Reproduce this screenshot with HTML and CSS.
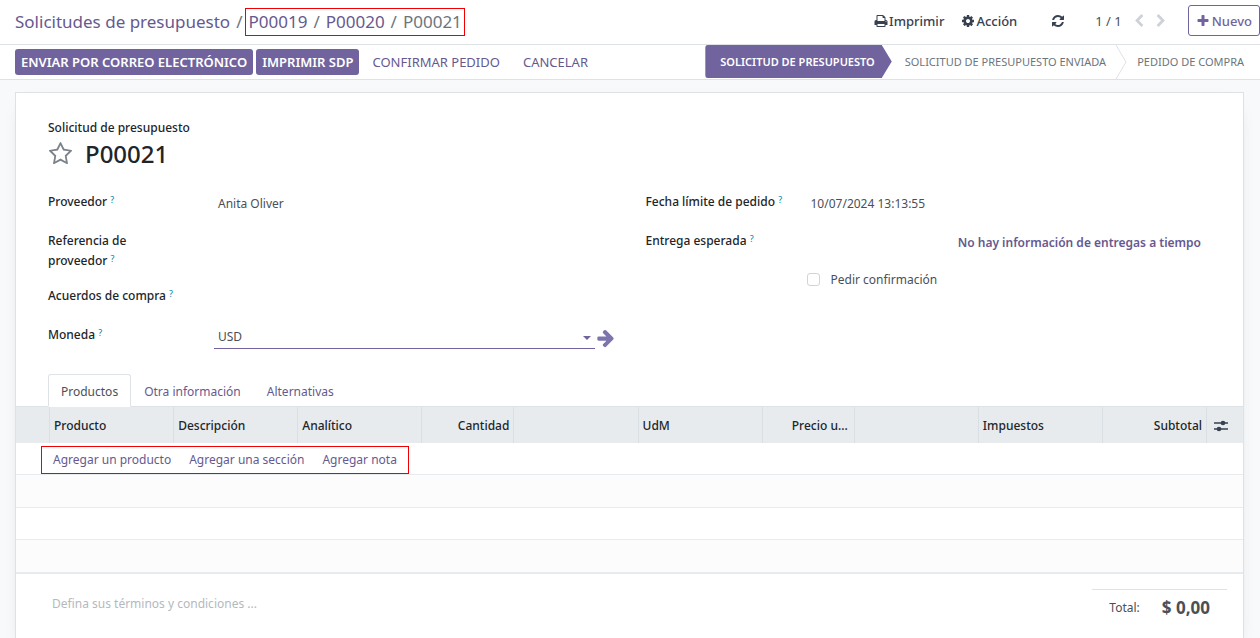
FILE: index.html
```
<!DOCTYPE html>
<html lang="es">
<head>
<meta charset="utf-8">
<title>P00021 - Solicitudes de presupuesto</title>
<link rel="stylesheet" href="styles.css">
</head>
<body>
<header class="topbar">
  <nav class="breadcrumb" aria-label="Ruta">
    <a class="crumb" href="#">Solicitudes de presupuesto</a>
    <span class="slash">/</span>
    <span class="marked crumbs-marked"><a class="crumb" href="#">P00019</a><span class="slash">/</span><a class="crumb" href="#">P00020</a><span class="slash">/</span><span class="current">P00021</span></span>
  </nav>
  <div class="tools">
    <button class="tool print" type="button"><svg class="icon" viewBox="0 0 1792 1792"><path d="M448 1536h896v-256h-896v256zm0-640h896v-384h-160q-40 0-68-28t-28-68v-160h-640v640zm1152 64q0-26-19-45t-45-19-45 19-19 45 19 45 45 19 45-19 19-45zm128 0v416q0 13-9.500 22.500t-22.500 9.500h-224v160q0 40-28 68t-68 28h-960q-40 0-68-28t-28-68v-160h-224q-13 0-22.500-9.500t-9.500-22.500v-416q0-79 56.500-135.500t135.500-56.500h64v-544q0-40 28-68t68-28h672q40 0 88 20t76 48l152 152q28 28 48 76t20 88v256h64q79 0 135.500 56.500t56.500 135.500z"/></svg>Imprimir</button>
    <button class="tool action" type="button"><svg class="icon" viewBox="0 0 1792 1792"><path d="M1152 896q0-106-75-181t-181-75-181 75-75 181 75 181 181 75 181-75 75-181zm512-109v222q0 12-8 23t-20 13l-185 28q-19 54-39 91 35 50 107 138 10 12 10 25t-9 23q-27 37-99 108t-94 71q-12 0-26-9l-138-108q-44 23-91 38-16 136-29 186-7 28-36 28h-222q-14 0-24.500-8.500t-11.500-21.500l-28-184q-49-16-90-37l-141 107q-10 9-25 9-14 0-25-11-126-114-165-168-7-10-7-23 0-12 8-23 15-21 51-66.500t54-70.500q-27-50-41-99l-183-27q-13-2-21-12.500t-8-23.500v-222q0-12 8-23t19-13l186-28q14-46 39-92-40-57-107-138-10-12-10-24 0-10 9-23 26-36 98.500-107.500t94.500-71.500q13 0 26 10l138 107q44-23 91-38 16-136 29-186 7-28 36-28h222q14 0 24.500 8.500t11.500 21.500l28 184q49 16 90 37l142-107q9-9 24-9 13 0 25 10 129 119 165 170 7 8 7 22 0 12-8 23-15 21-51 66.500t-54 70.500q26 50 41 98l183 28q13 2 21 12.500t8 23.500z"/></svg>Acción</button>
    <button class="tool refresh" type="button" aria-label="Actualizar"><svg class="icon" viewBox="0 0 1792 1792"><path d="M1639 1056q0 5-1 7-64 268-268 434.500t-478 166.500q-146 0-282.500-55t-243.500-157l-129 129q-19 19-45 19t-45-19-19-45v-448q0-26 19-45t45-19h448q26 0 45 19t19 45-19 45l-137 137q71 66 161 102t187 36q134 0 250-65t186-179q11-17 53-117 8-23 30-23h192q13 0 22.500 9.500t9.500 22.500zm25-800v448q0 26-19 45t-45 19h-448q-26 0-45-19t-19-45 19-45l138-138q-148-137-349-137-134 0-250 65t-186 179q-11 17-53 117-8 23-30 23h-199q-13 0-22.500-9.500t-9.500-22.500v-7q65-268 270-434.500t480-166.500q146 0 284 55.500t245 156.500l130-129q19-19 45-19t45 19 19 45z"/></svg></button>
    <span class="pager">1 / 1</span>
    <button class="tool page" type="button" aria-label="Anterior" disabled><svg class="icon" viewBox="0 0 1792 1792"><path d="M1427 301l-531 531 531 531q19 19 19 45t-19 45l-166 166q-19 19-45 19t-45-19l-742-742q-19-19-19-45t19-45l742-742q19-19 45-19t45 19l166 166q19 19 19 45t-19 45z"/></svg></button>
    <button class="tool page" type="button" aria-label="Siguiente" disabled><svg class="icon" viewBox="0 0 1792 1792"><path d="M1363 877l-742 742q-19 19-45 19t-45-19l-166-166q-19-19-19-45t19-45l531-531-531-531q-19-19-19-45t19-45l166-166q19-19 45-19t45 19l742 742q19 19 19 45t-19 45z"/></svg></button>
    <button class="new" type="button"><svg class="icon" viewBox="0 0 1792 1792"><path d="M1600 736v192q0 40-28 68t-68 28h-416v416q0 40-28 68t-68 28h-192q-40 0-68-28t-28-68v-416h-416q-40 0-68-28t-28-68v-192q0-40 28-68t68-28h416v-416q0-40 28-68t68-28h192q40 0 68 28t28 68v416h416q40 0 68 28t28 68z"/></svg>Nuevo</button>
  </div>
</header>

<div class="statusbar">
  <div class="actions">
    <button class="btn primary" type="button">ENVIAR POR CORREO ELECTRÓNICO</button>
    <button class="btn primary" type="button">IMPRIMIR SDP</button>
    <button class="btn" type="button">CONFIRMAR PEDIDO</button>
    <button class="btn" type="button">CANCELAR</button>
  </div>
  <div class="stages">
    <button class="stage active" type="button" aria-current="step">SOLICITUD DE PRESUPUESTO</button>
    <button class="stage sent" type="button">SOLICITUD DE PRESUPUESTO ENVIADA</button>
    <svg class="divider" viewBox="0 0 12 34"><path d="M1 0L11 17L1 34"/></svg>
    <button class="stage" type="button">PEDIDO DE COMPRA</button>
  </div>
</div>

<main class="content">
  <div class="sheet">
    <div class="sheet-head">
      <div class="kind">Solicitud de presupuesto</div>
      <div class="title-row">
        <button class="star" type="button" aria-label="Prioridad"><svg class="star-icon" viewBox="0 0 1792 1792"><path d="M1201 1004l306-297-422-62-189-382-189 382-422 62 306 297-73 421 378-199 377 199zm527-357q0 22-26 48l-363 354 86 500q1 7 1 20 0 50-41 50-19 0-40-12l-449-236-449 236q-22 12-40 12-21 0-31.500-14.500t-10.500-35.500q0-6 2-20l86-500-364-354q-25-27-25-48 0-37 56-46l502-73 225-455q19-41 49-41t49 41l225 455 502 73q56 9 56 46z"/></svg></button>
        <h1 class="title">P00021</h1>
      </div>
    </div>

    <div class="groups">
      <div class="group">
        <div class="field"><span class="label">Proveedor <sup class="help">?</sup></span><span class="value">Anita Oliver</span></div>
        <div class="field"><span class="label">Referencia de proveedor <sup class="help">?</sup></span></div>
        <div class="field"><span class="label">Acuerdos de compra <sup class="help">?</sup></span></div>
        <div class="field">
          <label class="label" for="currency">Moneda <sup class="help">?</sup></label>
          <div class="currency">
            <div class="select-wrap">
              <select class="select" id="currency"><option>USD</option></select>
              <svg class="caret" viewBox="0 0 8 4"><path d="M0 0h8L4 4z"/></svg>
            </div>
            <button class="open" type="button" aria-label="Abrir moneda"><svg class="open-icon" viewBox="96 100 1536 1536"><path d="M1600 960q0 54-37 91l-651 651q-39 37-91 37-51 0-90-37l-75-75q-38-38-38-91t38-91l293-293h-704q-52 0-84.500-37.500t-32.500-90.500v-128q0-53 32.500-90.500t84.500-37.500h704l-293-294q-38-36-38-90t38-90l75-75q38-38 90-38 53 0 91 38l651 651q37 35 37 90z"/></svg></button>
          </div>
        </div>
      </div>
      <div class="group right">
        <div class="field"><span class="label">Fecha límite de pedido <sup class="help">?</sup></span><span class="value">10/07/2024 13:13:55</span></div>
        <div class="field"><span class="label">Entrega esperada <sup class="help">?</sup></span><a class="value delivery" href="#">No hay información de entregas a tiempo</a></div>
        <div class="field"><span></span><div class="confirm"><input class="check" type="checkbox" id="confirm"><label for="confirm">Pedir confirmación</label></div></div>
      </div>
    </div>

    <div class="tabs" role="tablist">
      <button class="tab selected" type="button" role="tab" aria-selected="true">Productos</button>
      <button class="tab" type="button" role="tab">Otra información</button>
      <button class="tab" type="button" role="tab">Alternativas</button>
    </div>

    <table class="lines">
      <colgroup><col class="c-handle"><col><col><col><col class="c-num"><col><col><col class="c-num"><col><col><col class="c-sub"><col class="c-opt"></colgroup>
      <thead>
        <tr>
          <th></th><th>Producto</th><th>Descripción</th><th>Analítico</th><th class="num">Cantidad</th><th></th><th>UdM</th><th class="num price">Precio u...</th><th></th><th>Impuestos</th><th class="num">Subtotal</th>
          <th><button class="columns" type="button" aria-label="Columnas opcionales"><svg class="sliders" viewBox="0 0 14 12"><path d="M0 3h14M0 9h14" fill="none" stroke="currentColor" stroke-width="1.300"/><circle cx="9" cy="3" r="2.300"/><circle cx="5" cy="9" r="2.300"/></svg></button></th>
        </tr>
      </thead>
      <tbody>
        <tr><td class="add-cell" colspan="12"><div class="marked adders"><a class="add" href="#">Agregar un producto</a><a class="add" href="#">Agregar una sección</a><a class="add" href="#">Agregar nota</a></div></td></tr>
        <tr class="shade"><td colspan="12"></td></tr>
        <tr><td colspan="12"></td></tr>
        <tr class="shade"><td colspan="12"></td></tr>
      </tbody>
    </table>

    <div class="sheet-foot">
      <textarea class="terms" rows="1" aria-label="Términos y condiciones" placeholder="Defina sus términos y condiciones ..."></textarea>
      <div class="total"><span>Total:</span><strong class="amount">$ 0,00</strong></div>
    </div>
  </div>
</main>
</body>
</html>
```
FILE: styles.css
```
* { box-sizing: border-box; }

body {
  margin: 0;
  background: #f8f9fa;
  color: #495057;
  font: 12px/20px "Noto Sans", "Open Sans", sans-serif;
  overflow: hidden;
}

button {
  border: 0;
  padding: 0;
  background: none;
  color: inherit;
  font: inherit;
  white-space: nowrap;
}

a { color: #66598f; text-decoration: none; }
svg { display: block; fill: currentColor; }
.icon { width: 14px; height: 14px; }
.marked { border: 1px solid #f00000; }

.topbar {
  display: flex;
  justify-content: space-between;
  align-items: flex-start;
  height: 45px;
  padding-left: 15px;
  background: #fff;
  border-bottom: 1px solid #dee2e6;
}

.breadcrumb {
  display: flex;
  align-items: center;
  padding-top: 8px;
  font-size: 17px;
  line-height: 26px;
}
.slash { color: #6c757d; padding: 0 6px; }
.breadcrumb > .slash { padding: 0 3px 0 6px; }
.crumbs-marked { padding: 0 2px; }
.current { color: #6c757d; }

.tools { display: flex; align-items: center; padding-top: 5px; font-size: 13px; }
.tool { display: flex; align-items: center; gap: 1px; color: #374151; font-weight: 500; }
.print { margin-right: 17px; }
.action { margin-right: 34px; }
.refresh { margin-right: 30px; }
.pager { margin-right: 10px; }
.page { margin-right: 8px; color: #ced2d8; }
.page + .new { margin-left: 12px; }
.new {
  display: flex;
  align-items: center;
  gap: 2px;
  height: 31px;
  padding: 0 7px;
  border: 1px solid #71639e;
  border-radius: 3px;
  color: #71639e;
  font-weight: 500;
}

.statusbar {
  display: flex;
  justify-content: space-between;
  height: 35px;
  padding: 0 16px 0 15px;
  background: #fff;
  border-bottom: 1px solid #dee2e6;
}
.actions { display: flex; align-items: center; gap: 3px; font-size: 13px; }
.btn {
  height: 26px;
  padding: 0 10px;
  border-radius: 3px;
  color: #66598f;
}
.primary { padding: 0 6px; background: #71639e; color: #fff; font-weight: 600; }
.stages { display: flex; font-size: 11px; color: #6c757d; }
.stage { height: 33px; }
.active {
  padding: 0 17px 0 15px;
  background: #71639e;
  color: #fff;
  font-weight: 600;
  border-radius: 3px 0 0 3px;
  clip-path: polygon(0 0, calc(100% - 10px) 0, 100% 50%, calc(100% - 10px) 100%, 0 100%);
}
.sent { padding: 0 9px 0 13px; }
.divider { width: 12px; height: 34px; margin-right: 10px; fill: none; stroke: #dee2e6; }

.content { padding: 12px 16px 0 15px; }
.sheet {
  min-height: 560px;
  background: #fff;
  border: 1px solid #dee2e6;
  box-shadow: 0 5px 20px -15px rgba(0, 0, 0, 0.4);
}
.sheet-head { padding: 25px 32px 0; color: #212529; }
.kind { font-weight: 500; }
.title-row { display: flex; align-items: center; gap: 12px; height: 31px; }
.star { color: #7c828a; }
.star-icon { width: 25px; height: 26px; }
.title { margin: 0; font-size: 24px; line-height: 31px; font-weight: 500; color: #212529; }

.groups {
  display: grid;
  grid-template-columns: 1fr 1fr;
  gap: 32px;
  padding: 18px 32px 0;
}
.group { display: flex; flex-direction: column; gap: 10px; }
.field { display: grid; grid-template-columns: 166px 1fr; min-height: 29px; }
.right .field { grid-template-columns: 161px 1fr; }
.label { padding: 5px 40px 0 0; color: #212529; font-weight: 500; }
.right .label, .field:nth-child(3) .label { padding-right: 0; }
.help { color: #0180a5; font-size: 9px; line-height: 0; font-weight: 400; vertical-align: 3px; }
.value { padding: 7px 4px 0; }
.delivery { padding-right: 10px; text-align: right; font-weight: 600; }
.currency { display: flex; align-items: center; gap: 2px; }
.select-wrap { position: relative; flex: 1; }
.select {
  display: block;
  width: 100%;
  height: 29px;
  padding: 6px 4px 0;
  border: 0;
  border-bottom: 1px solid #71639e;
  appearance: none;
  background: none;
  color: inherit;
  font: inherit;
}
.caret { position: absolute; right: 4px; top: 16px; width: 8px; height: 4px; color: #71639e; }
.open { color: #7c74ac; padding-top: 5px; }
.open-icon { width: 17px; height: 17px; overflow: visible; }
.confirm { display: flex; align-items: center; gap: 11px; }
.check {
  width: 13px;
  height: 13px;
  margin: 0;
  appearance: none;
  border: 1px solid #ced4da;
  border-radius: 3px;
  background: #fff;
}

.tabs { display: flex; padding: 25px 32px 0; border-bottom: 1px solid #dee2e6; }
.tab { height: 33px; padding: 2px 12px 0; color: #66598f; border: 1px solid transparent; margin-bottom: -1px; }
.selected { color: #495057; background: #fff; border-color: #dee2e6 #dee2e6 #fff; border-radius: 3px 3px 0 0; }

.lines { width: 100%; table-layout: fixed; border-collapse: separate; border-spacing: 0; border-bottom: 2px solid #e7eaee; }
.c-handle { width: 34px; }
.c-num { width: 92px; }
.c-sub { width: 104px; }
.c-opt { width: 36px; }
th {
  height: 36px;
  padding: 2px 4px 0;
  background: #e7ebee;
  border-right: 1px solid #dadfe3;
  color: #212529;
  font-weight: 500;
  text-align: left;
  white-space: nowrap;
}
th:last-child { border-right: 0; }
.num { text-align: right; }
.price { padding-right: 6px; }
.columns { display: block; padding: 0 3px; color: #374151; }
.sliders { width: 14px; height: 12px; }
td { height: 33px; padding: 0; border-bottom: 1px solid #e9ecef; }
tr:nth-last-child(-n+2) td { height: 32px; }
tr:last-child td { border-bottom: 0; }
.shade td { background: #fcfcfc; }
.add-cell { height: 32px; padding-left: 25px; vertical-align: bottom; }
.adders { display: inline-flex; gap: 18px; padding: 3px 11px; vertical-align: top; }

.sheet-foot { display: flex; justify-content: space-between; padding: 15px 16px 0 32px; }
.terms {
  width: 400px;
  height: 30px;
  padding: 5px 4px;
  border: 0;
  resize: none;
  background: none;
  color: inherit;
  font: inherit;
}
.terms::placeholder { color: #b4b9be; }
.total { display: flex; align-items: center; gap: 22px; height: 36px; padding: 0 17px; border-top: 1px solid #dee2e6; }
.amount { font-size: 17px; }
```
